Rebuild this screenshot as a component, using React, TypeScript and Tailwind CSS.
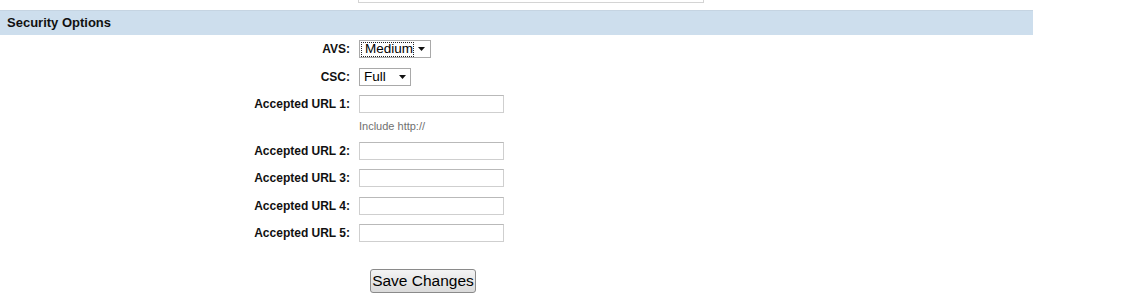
import React from "react";

const Label = ({ children }: { children: React.ReactNode }) => (
  <div className="w-[350px] shrink-0 text-right text-[12px] font-bold text-[#111] leading-none">
    {children}
  </div>
);

const Input = () => (
  <div className="h-[18px] w-[145px] border border-[#cfcfcf] border-t-[#b9b9b9] bg-white" />
);

const Arrow = () => (
  <svg width="7" height="4" viewBox="0 0 7 4" className="block">
    <path d="M0 0 L7 0 L3.5 4 Z" fill="#111" />
  </svg>
);

export default function App() {
  return (
    <div className="w-[1125px] h-[302px] bg-white font-['Liberation_Sans',Arial,sans-serif] text-black overflow-hidden">
      <div className="h-[10px]">
        <div className="ml-[358px] w-[346px] h-[3px] border border-t-0 border-[#d4d4d4]" />
      </div>
      <div className="h-[25px] w-[1033px] bg-[#cddeed] border-t border-[#c5d4e2] flex items-center pl-[7px] text-[13px] font-bold text-[#111]">
        Security Options
      </div>

      <div className="mt-[5px] flex flex-col">
        <div className="flex items-center h-[18px] gap-[9px]">
          <Label>AVS:</Label>
          <div className="h-[18px] w-[72px] border border-[#a9a9a9] bg-white flex items-center">
            <div className="ml-[1px] h-[15px] w-[53px] border border-dotted border-[#222] flex items-center pl-[3px] text-[13.5px] leading-none">
              Medium
            </div>
            <div className="flex-1 flex justify-center pr-[1px]">
              <Arrow />
            </div>
          </div>
        </div>

        <div className="mt-[10px] flex items-center h-[18px] gap-[9px]">
          <Label>CSC:</Label>
          <div className="h-[18px] w-[52px] border border-[#a9a9a9] bg-white flex items-center">
            <div className="ml-[1px] w-[34px] pl-[3px] text-[13.5px] leading-none">Full</div>
            <div className="flex-1 flex justify-center pr-[1px]">
              <Arrow />
            </div>
          </div>
        </div>

        <div className="mt-[9px] flex items-center h-[18px] gap-[9px]">
          <Label>Accepted URL 1:</Label>
          <Input />
        </div>
        <div className="flex mt-[8px] h-[13px]">
          <div className="w-[359px]" />
          <div className="text-[11px] leading-none text-[#707070]">Include http://</div>
        </div>

        <div className="mt-[8px] flex items-center h-[18px] gap-[9px]">
          <Label>Accepted URL 2:</Label>
          <Input />
        </div>
        <div className="mt-[9px] flex items-center h-[18px] gap-[9px]">
          <Label>Accepted URL 3:</Label>
          <Input />
        </div>
        <div className="mt-[10px] flex items-center h-[18px] gap-[9px]">
          <Label>Accepted URL 4:</Label>
          <Input />
        </div>
        <div className="mt-[9px] flex items-center h-[18px] gap-[9px]">
          <Label>Accepted URL 5:</Label>
          <Input />
        </div>

        <div className="mt-[27px] pl-[370px]">
          <button className="h-[24px] w-[106px] whitespace-nowrap px-0 rounded-[3px] border border-[#8a8a8a] bg-gradient-to-b from-[#f4f4f4] to-[#dadada] text-[15.5px] leading-none text-black">
            Save Changes
          </button>
        </div>
      </div>
    </div>
  );
}
